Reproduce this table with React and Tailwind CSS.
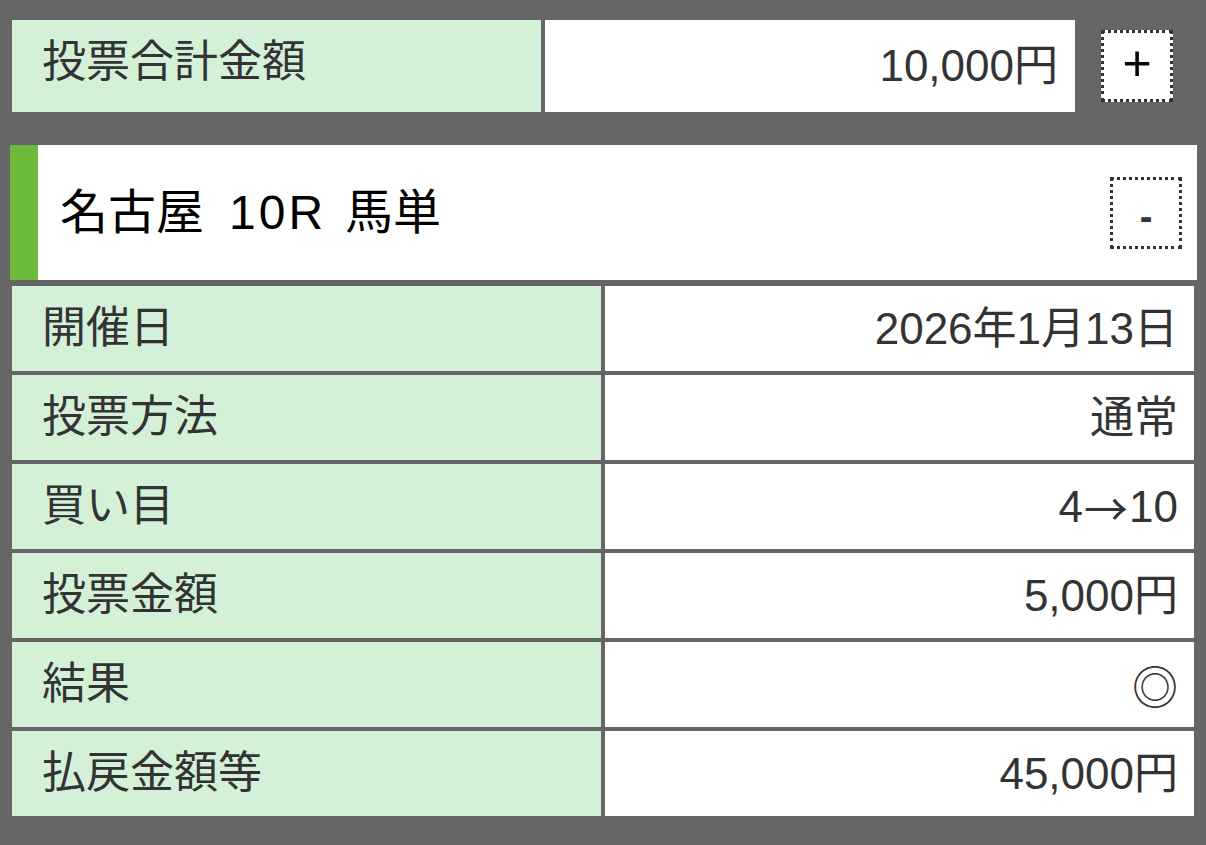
import React from "react";

const FONT = { fontFamily: '"Liberation Sans", "Noto Sans CJK JP", sans-serif' };
const CJK = { fontFamily: '"Noto Sans CJK JP", sans-serif' };

const rows = [
  ["開催日", "2026年1月13日"],
  ["投票方法", "通常"],
  ["買い目", (
    <>
      4<span style={CJK} className="mx-[1px]">→</span>10
    </>
  )],
  ["投票金額", "5,000円"],
  ["結果", <span style={CJK} className="text-[46px]">◎</span>],
  ["払戻金額等", "45,000円"],
];

export default function App() {
  return (
    <div className="w-[1206px] h-[845px] bg-[#666666] pt-[20px] overflow-hidden" style={FONT}>
      {/* total row */}
      <div className="flex items-center h-[92px] ml-[12px]">
        <div className="w-[529px] h-full bg-[#d4f1d8] pl-[30px] flex items-center text-[44px] text-[#333] pb-[8px]">
          投票合計金額
        </div>
        <div className="w-[530px] h-full ml-[4px] bg-white pr-[17px] flex items-center justify-end text-[44px] text-[#333]">
          10,000円
        </div>
        <div className="ml-[26px] w-[72px] h-[72px] bg-white border-[3px] border-dotted border-[#333] flex items-center justify-center">
          <span className="text-[50px] text-black leading-none mb-[6px]">+</span>
        </div>
      </div>

      {/* race header */}
      <div className="mt-[33px] ml-[10px] w-[1187px] h-[135px] flex">
        <div className="w-[28px] h-full bg-[#6cb93b]" />
        <div className="flex-1 bg-white flex items-center justify-between pl-[22px] pr-[15px]">
          <div className="text-[48px] text-black flex items-baseline">
            <span>名古屋</span>
            <span className="ml-[25px] tracking-[3px]">10R</span>
            <span className="ml-[19px]">馬単</span>
          </div>
          <div className="w-[72px] h-[72px] border-[3px] border-dotted border-[#333] bg-white flex items-center justify-center">
            <span className="text-[38px] font-bold text-[#333] leading-none mt-[8px]">-</span>
          </div>
        </div>
      </div>

      {/* details */}
      <div className="mt-[6px] ml-[12px] w-[1182px] flex flex-col gap-[4px]">
        {rows.map(([k, v]) => (
          <div key={k} className="grid grid-cols-2 gap-[4px] h-[85px]">
            <div className="bg-[#d4f1d8] pl-[30px] flex items-center text-[44px] text-[#333] pb-[2px]">{k}</div>
            <div className="bg-white pr-[16px] flex items-center justify-end text-[44px] text-[#333]">{v}</div>
          </div>
        ))}
      </div>
    </div>
  );
}
